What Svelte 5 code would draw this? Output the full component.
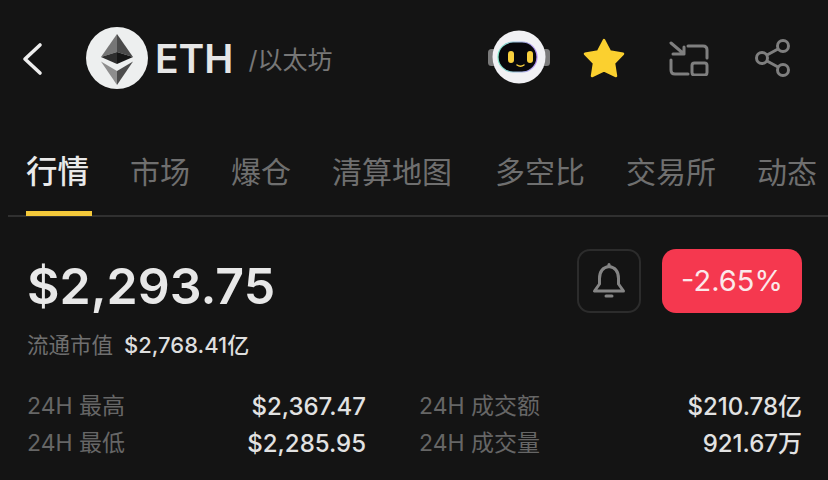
<script>
    const tabs = [
        { label: '行情', width: 63, active: true },
        { label: '市场', width: 60 },
        { label: '爆仓', width: 60 },
        { label: '清算地图', width: 122 },
        { label: '多空比', width: 90 },
        { label: '交易所', width: 90 },
        { label: '动态', width: 60 }
    ];

    const rows = [
        { left: '24H 最高', leftValue: '$2,367.47', right: '24H 成交额', rightValue: '$210.78亿' },
        { left: '24H 最低', leftValue: '$2,285.95', right: '24H 成交量', rightValue: '921.67万' }
    ];
</script>

<main class="screen">
    <header class="topbar">
        <button class="back" aria-label="返回">
            <svg width="24" height="36" viewBox="0 0 24 36">
                <path d="M19 5 L4 19 L19 33" fill="none" stroke="#eee" stroke-width="3.6" stroke-linecap="round" stroke-linejoin="round" />
            </svg>
        </button>
        <div class="coin-logo">
            <svg width="62" height="62" viewBox="0 0 62 62">
                <circle cx="31" cy="31" r="31" fill="#edefef" />
                <path d="M31 7 L15 30 L31 25 Z" fill="#767676" />
                <path d="M31 7 L47 30 L31 25 Z" fill="#4a4a4a" />
                <path d="M15 30 L31 25 L31 37 Z" fill="#2e2e2e" />
                <path d="M47 30 L31 25 L31 37 Z" fill="#161616" />
                <path d="M15 34.5 L31 44 L31 58 Z" fill="#8e8e8e" />
                <path d="M47 34.5 L31 44 L31 58 Z" fill="#4c4c4c" />
            </svg>
        </div>
        <span class="symbol">ETH</span>
        <span class="coin-name">/以太坊</span>

        <div class="actions">
            <div class="robot">
                <svg width="62" height="60" viewBox="0 0 62 60">
                    <defs>
                        <linearGradient id="glow" x1="0" y1="0" x2="1" y2="0">
                            <stop offset="0" stop-color="#7fe8c8" />
                            <stop offset="1" stop-color="#b48cf0" />
                        </linearGradient>
                    </defs>
                    <rect x="0" y="21" width="9" height="17" rx="3.5" fill="#7a7a7a" />
                    <rect x="53" y="21" width="9" height="17" rx="3.5" fill="#7a7a7a" />
                    <circle cx="31" cy="29" r="26.5" fill="#f1f1f4" />
                    <rect x="10" y="14" width="39" height="30" rx="15" fill="#08080c" stroke="url(#glow)" stroke-width="1.2" />
                    <rect x="20" y="23" width="6" height="12" rx="3" fill="#f8cf3e" />
                    <rect x="39" y="23" width="6" height="12" rx="3" fill="#f8cf3e" />
                    <path d="M29 37 Q32.5 39.5 36 37" fill="none" stroke="#f8cf3e" stroke-width="1.5" stroke-linecap="round" />
                </svg>
            </div>
            <svg class="star" width="44" height="42" viewBox="0 0 44 42">
                <path d="M22 3 L28 14.5 L41 16.8 L32 26.2 L34 39 L22 33.3 L10 39 L12 26.2 L3 16.8 L16 14.5 Z" fill="#fbd02f" stroke="#fbd02f" stroke-width="2.5" stroke-linejoin="round" />
            </svg>
            <svg class="swap" width="40" height="36" viewBox="0 0 40 36" fill="none" stroke="#7f7f7f" stroke-width="3" stroke-linecap="round" stroke-linejoin="round">
                <path d="M2 3 L15 14 M4 14 H15 V7" />
                <path d="M19 6 H34 Q38 6 38 10 V18" />
                <path d="M2 20 V30 Q2 34 6 34 H19" />
                <rect x="23" y="23" width="15" height="12" rx="2.5" />
            </svg>
            <svg class="share" width="38" height="40" viewBox="0 0 38 40" fill="none" stroke="#7f7f7f" stroke-width="3">
                <circle cx="28" cy="8" r="5.5" />
                <circle cx="7" cy="20" r="5.5" />
                <circle cx="28" cy="32" r="5.5" />
                <path d="M12 17 L23 11 M12 23 L23 29" />
            </svg>
        </div>
    </header>

    <nav class="tabs">
        {#each tabs as tab}
            <div class="tab" class:active={tab.active} style="width: {tab.width}px">{tab.label}</div>
        {/each}
    </nav>

    <section class="price-row">
        <div class="price-col">
            <div class="price">$2,293.75</div>
            <div class="cap">
                <span class="cap-label">流通市值</span>
                <span class="cap-value">$2,768.41亿</span>
            </div>
        </div>
        <button class="bell" aria-label="提醒">
            <svg width="36" height="38" viewBox="0 0 36 38" fill="none" stroke="#858585" stroke-width="3" stroke-linejoin="round" stroke-linecap="round">
                <path d="M18 4.5 C11 5.5 8.5 10.5 8.5 16.5 V22 L3.5 29 H32.5 L27.5 22 V16.5 C27.5 10.5 25 5.5 18 4.5 Z" />
                <path d="M18 2.5 V4" />
                <path d="M15 34 H21" />
            </svg>
        </button>
        <div class="change">-2.65%</div>
    </section>

    <section class="stats">
        {#each rows as row}
            <div class="stat">
                <span class="stat-label">{row.left}</span>
                <span class="stat-value">{row.leftValue}</span>
            </div>
            <div class="stat">
                <span class="stat-label">{row.right}</span>
                <span class="stat-value">{row.rightValue}</span>
            </div>
        {/each}
    </section>
</main>

<style>
    :global(body) {
        background: #141414;
    }

    .screen {
        width: 828px;
        height: 480px;
        overflow: hidden;
        background: #141414;
        font-family: Inter, "Noto Sans CJK SC", sans-serif;
    }

    .topbar {
        display: flex;
        align-items: center;
        height: 60px;
        padding: 28px 35px 0 21px;
    }

    .back {
        display: flex;
        padding: 0;
        border: none;
        background: none;
    }

    .coin-logo {
        display: flex;
        margin-left: 41px;
    }

    .symbol {
        margin-left: 7px;
        color: #e6e6e6;
        font-size: 39px;
        font-weight: 600;
        line-height: 1;
    }

    .coin-name {
        margin-left: 15px;
        color: #777;
        font-size: 25px;
    }

    .actions {
        display: flex;
        align-items: center;
        margin-left: auto;
    }

    .robot {
        display: flex;
    }

    .star {
        margin-left: 32px;
    }

    .swap {
        margin-left: 43px;
    }

    .share {
        margin-left: 46px;
    }

    .tabs {
        display: flex;
        gap: 0 41px;
        margin: 60px 0 0 8px;
        padding-left: 18px;
        height: 69px;
        border-bottom: 2px solid #303030;
        box-sizing: border-box;
        white-space: nowrap;
    }

    .tab {
        color: #6f6f6f;
        font-size: 30px;
        line-height: 40px;
        padding-top: 4px;
    }

    .tab.active {
        position: relative;
        color: #e9e9e9;
        font-size: 31.5px;
        font-weight: 500;
    }

    .tab.active::after {
        content: "";
        position: absolute;
        left: 0;
        right: -3px;
        bottom: -1px;
        height: 5px;
        background: #f4c93a;
    }

    .price-row {
        display: flex;
        align-items: flex-start;
        padding: 32px 26px 0 27px;
    }

    .price-col {
        flex: 1;
        margin-top: 7px;
    }

    .price {
        color: #e8e8e8;
        font-size: 50px;
        font-weight: 600;
        line-height: 60px;
    }

    .cap {
        display: flex;
        align-items: center;
        gap: 11px;
        margin-top: 11px;
    }

    .cap-label {
        color: #6f6f6f;
        font-size: 21.5px;
    }

    .cap-value {
        color: #dedede;
        font-size: 22px;
        font-weight: 500;
    }

    .bell {
        display: flex;
        align-items: center;
        justify-content: center;
        box-sizing: border-box;
        width: 64px;
        height: 64px;
        padding: 0;
        border: 2px solid #2c2c2c;
        border-radius: 13px;
        background: none;
    }

    .change {
        width: 140px;
        height: 64px;
        margin-left: 21px;
        border-radius: 14px;
        background: #f5384f;
        color: #fbe9ea;
        font-size: 29px;
        line-height: 64px;
        text-align: center;
    }

    .stats {
        display: grid;
        grid-template-columns: 339px 383px;
        column-gap: 53px;
        row-gap: 0;
        margin-top: 29px;
        padding-left: 27px;
    }

    .stat {
        display: flex;
        justify-content: space-between;
        height: 37px;
        line-height: 37px;
    }

    .stat-label {
        color: #666;
        font-size: 23px;
    }

    .stat-value {
        color: #e2e2e2;
        font-size: 24px;
        font-weight: 500;
    }
</style>
